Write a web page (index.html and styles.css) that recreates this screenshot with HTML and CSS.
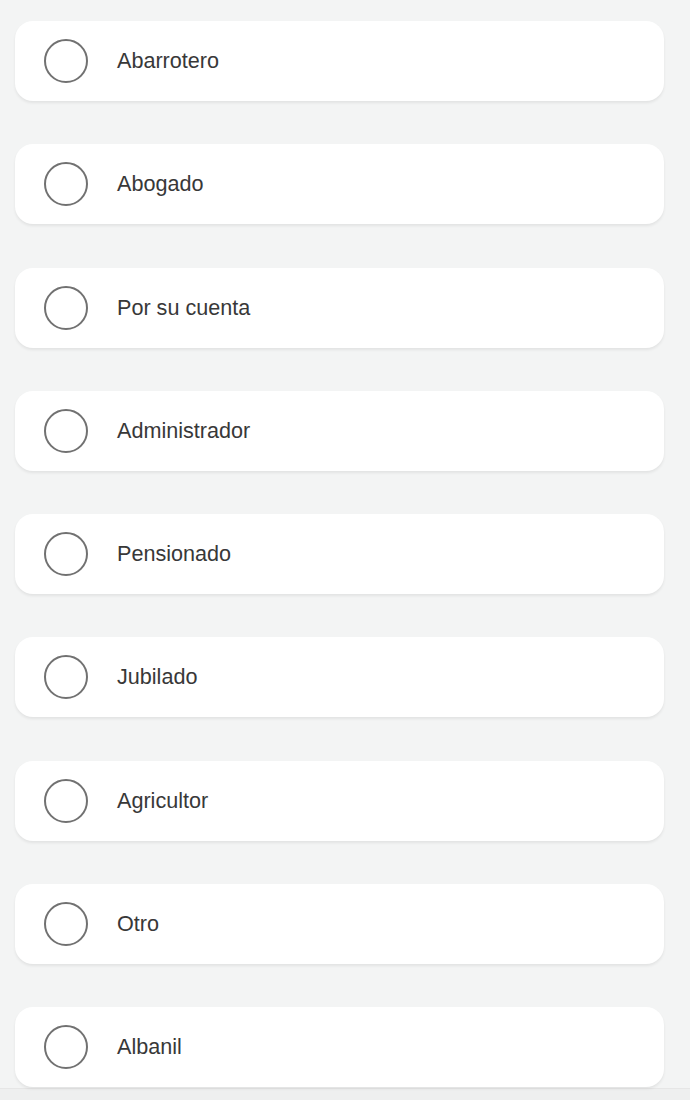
FILE: index.html
```html
<!DOCTYPE html>
<html lang="es">
<head>
    <meta charset="UTF-8">
    <meta name="viewport" content="width=device-width, initial-scale=1.0">
    <title>Ocupación</title>
    <link rel="stylesheet" href="styles.css">
</head>
<body>
    <div class="options">
        <label class="option"><span class="radio"></span><span class="option-label">Abarrotero</span></label>
        <label class="option"><span class="radio"></span><span class="option-label">Abogado</span></label>
        <label class="option"><span class="radio"></span><span class="option-label">Por su cuenta</span></label>
        <label class="option"><span class="radio"></span><span class="option-label">Administrador</span></label>
        <label class="option"><span class="radio"></span><span class="option-label">Pensionado</span></label>
        <label class="option"><span class="radio"></span><span class="option-label">Jubilado</span></label>
        <label class="option"><span class="radio"></span><span class="option-label">Agricultor</span></label>
        <label class="option"><span class="radio"></span><span class="option-label">Otro</span></label>
        <label class="option"><span class="radio"></span><span class="option-label">Albanil</span></label>
    </div>
    <div class="bottom-bar"></div>
</body>
</html>
```

FILE: styles.css
```css
* {
    margin: 0;
    padding: 0;
    box-sizing: border-box;
}

body {
    font-family: "Liberation Sans", Arial, sans-serif;
    background: #f3f4f4;
    height: 1100px;
    overflow: hidden;
}

.options {
    display: flex;
    flex-direction: column;
    gap: 43.3px;
    padding: 21px 26px 0 15px;
}

.option {
    display: flex;
    align-items: center;
    height: 80px;
    background: #fff;
    border-radius: 18px;
    padding-left: 29px;
    box-shadow: 0 2px 3px rgba(0, 0, 0, 0.07);
    cursor: pointer;
}

.radio {
    width: 44px;
    height: 44px;
    border: 2px solid #717171;
    border-radius: 50%;
    flex-shrink: 0;
}

.option-label {
    margin-left: 29px;
    font-size: 21.6px;
    color: #383838;
}

.bottom-bar {
    margin-top: 1px;
    height: 20px;
    background: #eeefef;
    border-top: 1px solid #e6e6e6;
}
```
